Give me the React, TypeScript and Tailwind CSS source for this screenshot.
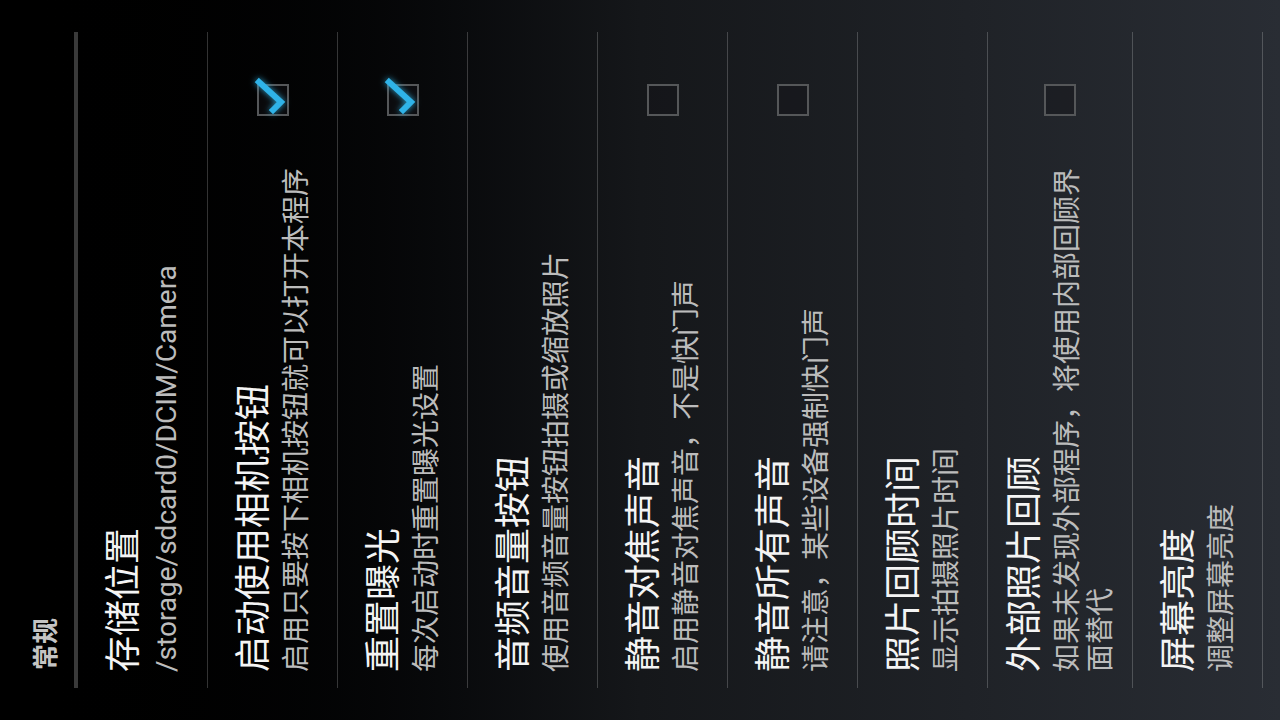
type Item = {
  title: string;
  summary: string;
  checkbox?: "on" | "off";
};

const items: Item[] = [
  { title: "存储位置", summary: "/storage/sdcard0/DCIM/Camera" },
  { title: "启动使用相机按钮", summary: "启用只要按下相机按钮就可以打开本程序", checkbox: "on" },
  { title: "重置曝光", summary: "每次启动时重置曝光设置", checkbox: "on" },
  { title: "音频音量按钮", summary: "使用音频音量按钮拍摄或缩放照片" },
  { title: "静音对焦声音", summary: "启用静音对焦声音，不是快门声", checkbox: "off" },
  { title: "静音所有声音", summary: "请注意，某些设备强制快门声", checkbox: "off" },
  { title: "照片回顾时间", summary: "显示拍摄照片时间" },
  { title: "外部照片回顾", summary: "如果未发现外部程序，将使用内部回顾界面替代", checkbox: "off" },
  { title: "屏幕亮度", summary: "调整屏幕亮度" },
];

const CheckBox = ({ checked }: { checked: boolean }) => (
  <div className="relative w-[32px] h-[32px] shrink-0 border-2 border-[#555759] bg-[#141518]/40">
    {checked && (
      <svg
        width="44"
        height="36"
        viewBox="0 0 44 36"
        className="absolute left-[-6px] top-[-6px] overflow-visible drop-shadow-[0_0_3px_rgba(51,181,229,0.85)]"
      >
        <path
          d="M10 20 L18 28 L38 6"
          fill="none"
          stroke="#2fb3e8"
          strokeWidth="6"
          strokeLinecap="square"
          strokeLinejoin="miter"
        />
      </svg>
    )}
  </div>
);

const Row = ({ item }: { item: Item }) => (
  <>
    <div className="flex items-center min-h-[129px] py-[15px] pl-[16px] pr-[52px]">
      <div className="flex-1 min-w-0 pr-[26px]">
        <div className="text-[36px] leading-[44px] text-[#f4f4f4]">{item.title}</div>
        <div className="text-[28px] leading-[33px] text-[#bcbcbc] mt-[4px]">{item.summary}</div>
      </div>
      {item.checkbox && <CheckBox checked={item.checkbox === "on"} />}
    </div>
    <div className="h-px bg-white/20" />
  </>
);

export default function App() {
  return (
    <div className="w-[1280px] h-[720px] overflow-hidden bg-linear-to-r from-black via-[#15171a] to-[#292d34]">
      <div className="w-[720px] h-[1280px] origin-top-left -rotate-90 translate-y-[720px] px-[32px] font-['Roboto','Noto_Sans_CJK_SC',sans-serif]">
        <div className="h-[74px] pt-[26px] pl-[18px] text-[26px] leading-[40px] font-bold text-[#c4c4c4]">
          常规
        </div>
        <div className="h-[4px] bg-[#3a3a3a]" />
        {items.map((item) => (
          <Row key={item.title} item={item} />
        ))}
      </div>
    </div>
  );
}
